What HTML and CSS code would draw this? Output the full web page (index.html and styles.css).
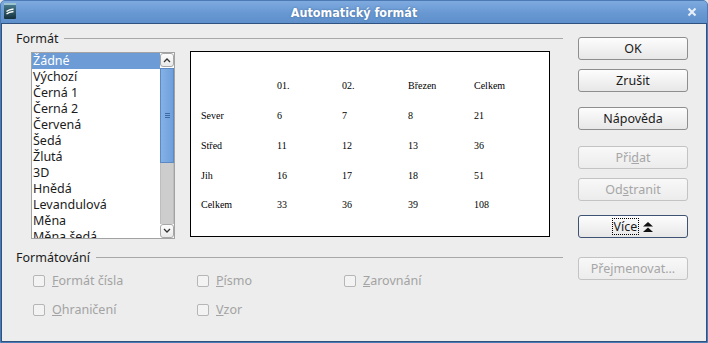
FILE: index.html
```html
<!DOCTYPE html>
<html lang="cs">
  <head>
    <meta charset="UTF-8" />
    <title>Automatický formát</title>
    <link rel="stylesheet" href="styles.css">
  </head>
  <body>
    <div class="window">
      <div class="titlebar">
        <div class="title-slot">
          <svg class="app-icon" width="12" height="16" viewBox="0 0 12 16">
            <defs>
              <linearGradient id="ic" x1="0" y1="0" x2="0" y2="1">
                <stop offset="0" stop-color="#4d8296" />
                <stop offset="1" stop-color="#15303c" />
              </linearGradient>
            </defs>
            <rect x="0" y="0" width="12" height="16" rx="1" fill="url(#ic)" />
            <rect x="0" y="0" width="12" height="2" fill="#9cc3d0" />
            <path d="M2.5 8.5 Q5 6.5 9.5 6" stroke="#fff" stroke-width="1.3" fill="none" />
            <path d="M2.5 11 Q5 9 9.5 8.5" stroke="#fff" stroke-width="1.3" fill="none" />
          </svg>
        </div>
        <span class="title">Automatický formát</span>
        <div class="title-slot right">
          <svg class="close" width="10" height="10" viewBox="0 0 10 10">
            <path d="M1.5 1.5 L8.5 8.5 M8.5 1.5 L1.5 8.5" stroke="#e6eef8" stroke-width="2.2" />
          </svg>
        </div>
      </div>

      <div class="dialog">
        <div class="main">
          <div class="group-head"><span>Formát</span></div>
          <div class="format-row">
            <div class="listbox">
              <ul class="items">
                <li class="selected">Žádné</li>
                <li>Výchozí</li>
                <li>Černá 1</li>
                <li>Černá 2</li>
                <li>Červená</li>
                <li>Šedá</li>
                <li>Žlutá</li>
                <li>3D</li>
                <li>Hnědá</li>
                <li>Levandulová</li>
                <li>Měna</li>
                <li>Měna šedá</li>
              </ul>
              <div class="scrollbar">
                <div class="sb-btn">
                  <svg width="8" height="6" viewBox="0 0 8 6"><polyline points="1,5 4,2 7,5" stroke="#333" stroke-width="1.3" fill="none" /></svg>
                </div>
                <div class="sb-thumb"><span class="grip"></span></div>
                <div class="sb-track"></div>
                <div class="sb-btn">
                  <svg width="8" height="6" viewBox="0 0 8 6"><polyline points="1,1 4,4 7,1" stroke="#333" stroke-width="1.3" fill="none" /></svg>
                </div>
              </div>
            </div>

            <div class="preview">
              <div class="cell"></div>
              <div class="cell">01.</div>
              <div class="cell">02.</div>
              <div class="cell">Březen</div>
              <div class="cell">Celkem</div>

              <div class="cell">Sever</div>
              <div class="cell">6</div>
              <div class="cell">7</div>
              <div class="cell">8</div>
              <div class="cell">21</div>

              <div class="cell">Střed</div>
              <div class="cell">11</div>
              <div class="cell">12</div>
              <div class="cell">13</div>
              <div class="cell">36</div>

              <div class="cell">Jih</div>
              <div class="cell">16</div>
              <div class="cell">17</div>
              <div class="cell">18</div>
              <div class="cell">51</div>

              <div class="cell">Celkem</div>
              <div class="cell">33</div>
              <div class="cell">36</div>
              <div class="cell">39</div>
              <div class="cell">108</div>
            </div>
          </div>

          <div class="group-head second"><span>Formátování</span></div>
          <div class="options">
            <label class="check"><span class="box"></span><span><u>F</u>ormát čísla</span></label>
            <label class="check"><span class="box"></span><span><u>P</u>ísmo</span></label>
            <label class="check"><span class="box"></span><span><u>Z</u>arovnání</span></label>
            <label class="check"><span class="box"></span><span><u>O</u>hraničení</span></label>
            <label class="check"><span class="box"></span><span><u>V</u>zor</span></label>
          </div>
        </div>

        <div class="buttons">
          <div class="btn-group">
            <button class="btn">OK</button>
            <button class="btn">Zrušit</button>
          </div>
          <div class="btn-group help">
            <button class="btn">Nápověda</button>
          </div>
          <div class="btn-group edit">
            <button class="btn disabled"><span>Při<u>d</u>at</span></button>
            <button class="btn disabled"><span>Od<u>s</u>tranit</span></button>
          </div>
          <div class="btn-group more">
            <button class="btn focus">
              <span class="focus-ring">Více</span>
              <svg class="more-icon" width="10" height="10" viewBox="0 0 10 10">
                <polygon points="0,4.5 5,0 10,4.5" fill="#111" />
                <polygon points="0,10 5,5.5 10,10" fill="#111" />
              </svg>
            </button>
          </div>
          <div class="btn-group rename">
            <button class="btn disabled">Přejmenovat...</button>
          </div>
        </div>
      </div>
    </div>
  </body>
</html>
```

FILE: styles.css
```css
* {
  margin: 0;
  padding: 0;
  box-sizing: border-box;
}

html,
body {
  width: 708px;
  height: 343px;
  overflow: hidden;
}

body {
  background: #e6e6e6;
  font-family: "Noto Sans", "Open Sans", sans-serif;
  font-size: 12.5px;
  color: #1b1b1b;
}

.window {
  width: 708px;
  height: 343px;
  display: flex;
  flex-direction: column;
  border: 1px solid #4b7ab4;
  border-radius: 5px 5px 0 0;
  overflow: hidden;
  background: #5889c4;
}

/* title bar */
.titlebar {
  height: 22px;
  display: flex;
  align-items: center;
  background: linear-gradient(#7eaadf, #6898d2 55%, #5f90cb);
}

.title-slot {
  width: 40px;
  height: 22px;
  display: flex;
  align-items: center;
  padding-left: 3px;
}

.title-slot.right {
  justify-content: flex-end;
  padding-left: 0;
  padding-right: 10px;
}

.app-icon {
  display: block;
  margin-top: -2px;
}

.close {
  display: block;
}

.title {
  flex: 1;
  text-align: center;
  color: #fff;
  font-family: "DejaVu Sans Condensed", "DejaVu Sans", sans-serif;
  font-weight: bold;
  font-size: 12.5px;
  text-shadow: 0 0 2px rgba(30, 60, 100, 0.5);
}

/* dialog body */
.dialog {
  flex: 1;
  display: flex;
  align-items: flex-start;
  background: #ededed;
  border: 1px solid #30527f;
  padding: 6px 18px 0 14px;
}

.main {
  width: 547px;
}

.group-head {
  display: flex;
  align-items: center;
  height: 17px;
  line-height: 17px;
}

.group-head::after {
  content: "";
  flex: 1;
  border-top: 1px solid #a8a8a8;
  margin-left: 6px;
}

.group-head.second {
  margin-top: 10px;
}

.format-row {
  display: flex;
  align-items: flex-start;
  height: 192px;
}

/* list */
.listbox {
  display: flex;
  width: 144px;
  height: 187px;
  margin: 5px 0 0 15px;
  border: 1px solid #a2a2a2;
  background: #fff;
}

.items {
  flex: 1;
  overflow: hidden;
  list-style: none;
}

.items li {
  height: 16px;
  line-height: 16px;
  padding-left: 1px;
  white-space: nowrap;
}

.items li.selected {
  background: #6c9bd5;
  color: #fff;
}

.scrollbar {
  width: 14px;
  display: flex;
  flex-direction: column;
  background: #fff;
}

.sb-btn {
  height: 14px;
  display: flex;
  align-items: center;
  justify-content: center;
  border: 1px solid #a7a7a7;
  border-radius: 3px;
  background: linear-gradient(#fdfdfd, #e9e9e9);
}

.sb-thumb {
  height: 95px;
  margin-top: 1px;
  display: flex;
  align-items: center;
  justify-content: center;
  background: linear-gradient(to right, #84b1e6, #6f9fdb);
  border: 1px solid #5a89c4;
}

.grip {
  width: 5px;
  height: 5px;
  border-top: 1px solid #3b6aa5;
  border-bottom: 1px solid #3b6aa5;
  position: relative;
}

.grip::after {
  content: "";
  position: absolute;
  left: 0;
  right: 0;
  top: 1px;
  border-top: 1px solid #3b6aa5;
}

.sb-track {
  flex: 1;
  background: #cdcdcd;
  border-left: 1px solid #bdbdbd;
  border-right: 1px solid #bdbdbd;
}

/* preview */
.preview {
  width: 360px;
  height: 186px;
  margin: 4px 0 0 15px;
  border: 1px solid #000;
  background: #fff;
  padding: 19px 0 0 10px;
  display: grid;
  grid-template-columns: 76px 65px 66px 66px auto;
  grid-auto-rows: 29.75px;
  align-content: start;
  font-family: "Liberation Serif", "Times New Roman", serif;
  font-size: 10px;
  color: #000;
}

.cell {
  display: flex;
  align-items: center;
}

/* options */
.options {
  display: grid;
  grid-template-columns: 164px 147px auto;
  grid-auto-rows: 29px;
  align-items: center;
  padding-left: 17px;
}

.check {
  display: flex;
  align-items: center;
  gap: 7px;
  color: #a3a3a3;
}

.box {
  width: 12px;
  height: 12px;
  border: 1px solid #b6b6b6;
  border-radius: 2px;
  background: #f3f3f3;
}

/* buttons */
.buttons {
  width: 110px;
  margin-left: 15px;
  padding-top: 7px;
  display: flex;
  flex-direction: column;
}

.btn-group {
  display: flex;
  flex-direction: column;
  gap: 9px;
}

.btn-group.help {
  margin-top: 15px;
}

.btn-group.edit {
  margin-top: 16px;
}

.btn-group.more {
  margin-top: 14px;
}

.btn-group.rename {
  margin-top: 19px;
}

.btn {
  width: 110px;
  height: 23px;
  display: flex;
  align-items: center;
  justify-content: center;
  gap: 5px;
  font-family: inherit;
  font-size: 12.5px;
  color: #1b1b1b;
  border: 1px solid #8e8e8e;
  border-radius: 3px;
  background: linear-gradient(#fdfdfd, #e7e7e7);
}

.btn.disabled {
  color: #a6a6a6;
  border-color: #c3c3c3;
  background: linear-gradient(#f8f8f8, #ececec);
}

.btn.focus {
  border-color: #3e5373;
}

.focus-ring {
  outline: 1px dotted #000;
  padding: 0 1px;
  line-height: 15px;
}

.more-icon {
  display: block;
}
```
